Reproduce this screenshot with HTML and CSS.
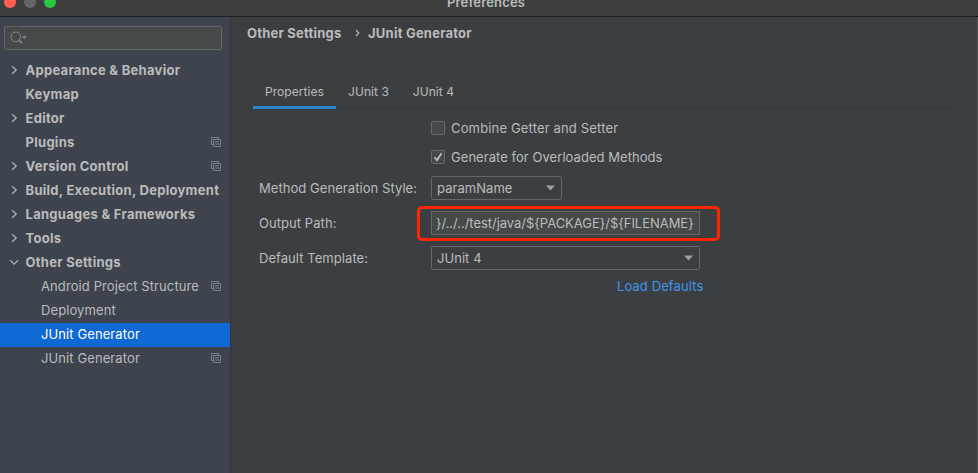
FILE: index.html
```html
<!DOCTYPE html>
<html lang="en">
<head>
<meta charset="utf-8">
<title>Preferences</title>
<link rel="stylesheet" href="styles.css">
</head>
<body>
<svg class="defs" aria-hidden="true">
  <symbol id="right" viewBox="0 0 10 10"><path d="M3.2 1.2 7.2 5 3.2 8.8" fill="none" stroke="currentColor" stroke-width="1.2"/></symbol>
  <symbol id="down" viewBox="0 0 10 10"><path d="M1.2 3.2 5.2 7.2 9.2 3.2" fill="none" stroke="currentColor" stroke-width="1.2"/></symbol>
  <symbol id="copy" viewBox="0 0 10 10"><path d="M2.5 7.5H.5V.5H7.5V2.5M2.5 2.5H9.5V9.5H2.5ZM4 4.9H8M4 7.1H8" fill="none" stroke="currentColor" stroke-width=".9"/></symbol>
</svg>
<header class="titlebar">
  <div class="lights"><i class="close"></i><i class="min"></i><i class="max"></i></div>
  <div class="title">Preferences</div>
</header>
<div class="window">
  <aside class="sidebar">
    <div class="search">
      <svg width="18" height="14" viewBox="0 0 18 14"><circle cx="5.8" cy="5.8" r="4.8" fill="none" stroke="currentColor"/><path d="M9.2 9.2 12.2 12.2" stroke="currentColor" stroke-width="1.4"/><path d="M12 5.2H16.8L14.4 8Z" fill="currentColor"/></svg>
    </div>
    <nav class="tree">
      <div class="row"><svg class="arrow"><use href="#right"/></svg><span>Appearance &amp; Behavior</span></div>
      <div class="row"><i class="arrow"></i><span>Keymap</span></div>
      <div class="row"><svg class="arrow"><use href="#right"/></svg><span>Editor</span></div>
      <div class="row"><i class="arrow"></i><span>Plugins</span><svg class="copy"><use href="#copy"/></svg></div>
      <div class="row"><svg class="arrow"><use href="#right"/></svg><span>Version Control</span><svg class="copy"><use href="#copy"/></svg></div>
      <div class="row"><svg class="arrow"><use href="#right"/></svg><span>Build, Execution, Deployment</span></div>
      <div class="row"><svg class="arrow"><use href="#right"/></svg><span>Languages &amp; Frameworks</span></div>
      <div class="row"><svg class="arrow"><use href="#right"/></svg><span>Tools</span></div>
      <div class="row"><svg class="arrow"><use href="#down"/></svg><span>Other Settings</span></div>
      <div class="row child"><span>Android Project Structure</span><svg class="copy"><use href="#copy"/></svg></div>
      <div class="row child"><span>Deployment</span></div>
      <div class="row child selected"><span>JUnit Generator</span></div>
      <div class="row child"><span>JUnit Generator</span><svg class="copy"><use href="#copy"/></svg></div>
    </nav>
  </aside>
  <main class="content">
    <div class="crumbs"><span>Other Settings</span><svg width="5" height="8" viewBox="0 0 5 8"><path d="M1 1 3.8 4 1 7" fill="none" stroke="currentColor" stroke-width="1.1"/></svg><span>JUnit Generator</span></div>
    <div class="tabs">
      <div class="tab active">Properties</div>
      <div class="tab">JUnit 3</div>
      <div class="tab">JUnit 4</div>
    </div>
    <div class="form">
      <div class="line check"><i class="box"></i><span class="wide">Combine Getter and Setter</span></div>
      <div class="line check second"><i class="box"><svg width="12" height="12" viewBox="0 0 12 12"><path d="M2.5 6.2 5 9.3 9.5 2.2" fill="none" stroke="currentColor" stroke-width="1.6"/></svg></i><span>Generate for Overloaded Methods</span></div>
      <div class="line"><label>Method Generation Style:</label><div class="combo small"><span>paramName</span><svg width="9" height="6" viewBox="0 0 9 6"><path d="M0 .5H9L4.5 5.5Z" fill="currentColor"/></svg></div></div>
      <div class="line"><label>Output Path:</label><div class="field"><span>}/../../test/java/${PACKAGE}/${FILENAME}</span><i class="highlight"></i></div></div>
      <div class="line"><label>Default Template:</label><div class="combo"><span>JUnit 4</span><svg width="9" height="6" viewBox="0 0 9 6"><path d="M0 .5H9L4.5 5.5Z" fill="currentColor"/></svg></div></div>
      <a class="link">Load Defaults</a>
    </div>
  </main>
</div>
</body>
</html>
```
FILE: styles.css
```css
* { box-sizing: border-box; }
body {
  margin: 0;
  width: 978px;
  height: 473px;
  overflow: hidden;
  background: #3c3f41;
  color: #bbbbbb;
  font: 13px/24px Inter, "Liberation Sans", sans-serif;
  letter-spacing: .05px;
  white-space: nowrap;
}
svg { display: block; flex: none; }
.defs { position: absolute; width: 0; height: 0; }
.titlebar {
  display: flex;
  height: 17px;
  border-bottom: 1px solid #1e2021;
  background: #3d403f;
}
.lights { display: flex; gap: 8px; width: 447px; padding-left: 4px; margin-top: -4px; }
.lights i { width: 12px; height: 12px; border-radius: 50%; }
.close { background: #ff5f57; }
.min { background: #656667; }
.max { background: #28c840; }
.title { margin-top: -10px; font-weight: 600; letter-spacing: .16px; }
.window { display: flex; height: 456px; border-right: 1px solid #54585b; }
.sidebar { width: 231px; background: #3e444d; border-right: 1px solid #333637; padding-top: 9px; }
.search {
  display: flex;
  align-items: center;
  width: 218px;
  height: 24px;
  margin: 0 0 9px 4px;
  padding-left: 5px;
  border: 1px solid #626665;
  border-radius: 2px;
  background: #45494a;
  color: #7f8b91;
}
.row {
  display: flex;
  align-items: center;
  height: 24px;
  padding: 0 9px 2px;
  font-weight: 700;
  letter-spacing: .28px;
}
.arrow { width: 10px; height: 10px; margin-right: 6.5px; flex: none; color: #b4b7ba; }
.copy { width: 10px; height: 10px; margin-left: auto; color: #7d878d; }
.child { padding-left: 41px; font-weight: 400; letter-spacing: .1px; }
.selected { background: #1068d4; color: #fff; }
.content { flex: 1; padding: 4px 21px 0 16px; }
.crumbs { display: flex; align-items: center; font-weight: 700; letter-spacing: .22px; height: 24px; }
.crumbs svg { margin: 0 8.5px 0 13px; }
.tabs { display: flex; height: 34px; margin: 30px 0 0 6px; border-bottom: 1px solid #333637; font-size: 12px; }
.tab { height: 34px; padding: 5px 12px 0; }
.active { width: 83px; border-bottom: 3px solid #2f84cb; }
.form { width: 453px; margin-left: 12px; padding-top: 7px; }
.line { display: flex; align-items: center; height: 24px; margin-bottom: 11px; }
.line label { width: 172px; flex: none; letter-spacing: .06px; }
.check { padding-left: 172px; margin-bottom: 5px; }
.second { margin-bottom: 7px; }
.wide { letter-spacing: .16px; }
.box { width: 14px; height: 14px; margin-right: 6px; border: 1px solid #67696a; border-radius: 2px; background: #43494a; color: #c3c3c3; }
.combo, .field {
  display: flex;
  align-items: center;
  justify-content: space-between;
  width: 269px;
  height: 24px;
  padding: 0 6px 0 5px;
  border: 1px solid #646668;
  border-radius: 2px;
}
.combo svg { color: #9da0a3; }
.small { width: 131px; }
.field { position: relative; padding-left: 4px; border-radius: 0; background: #45494a; letter-spacing: -.03px; }
.highlight { position: absolute; inset: -6px -21px -7px -15px; border: 3px solid #ff2600; border-radius: 5px; }
.link { display: block; width: max-content; margin: -7px 0 0 358px; color: #3f94ee; letter-spacing: .1px; }
```
